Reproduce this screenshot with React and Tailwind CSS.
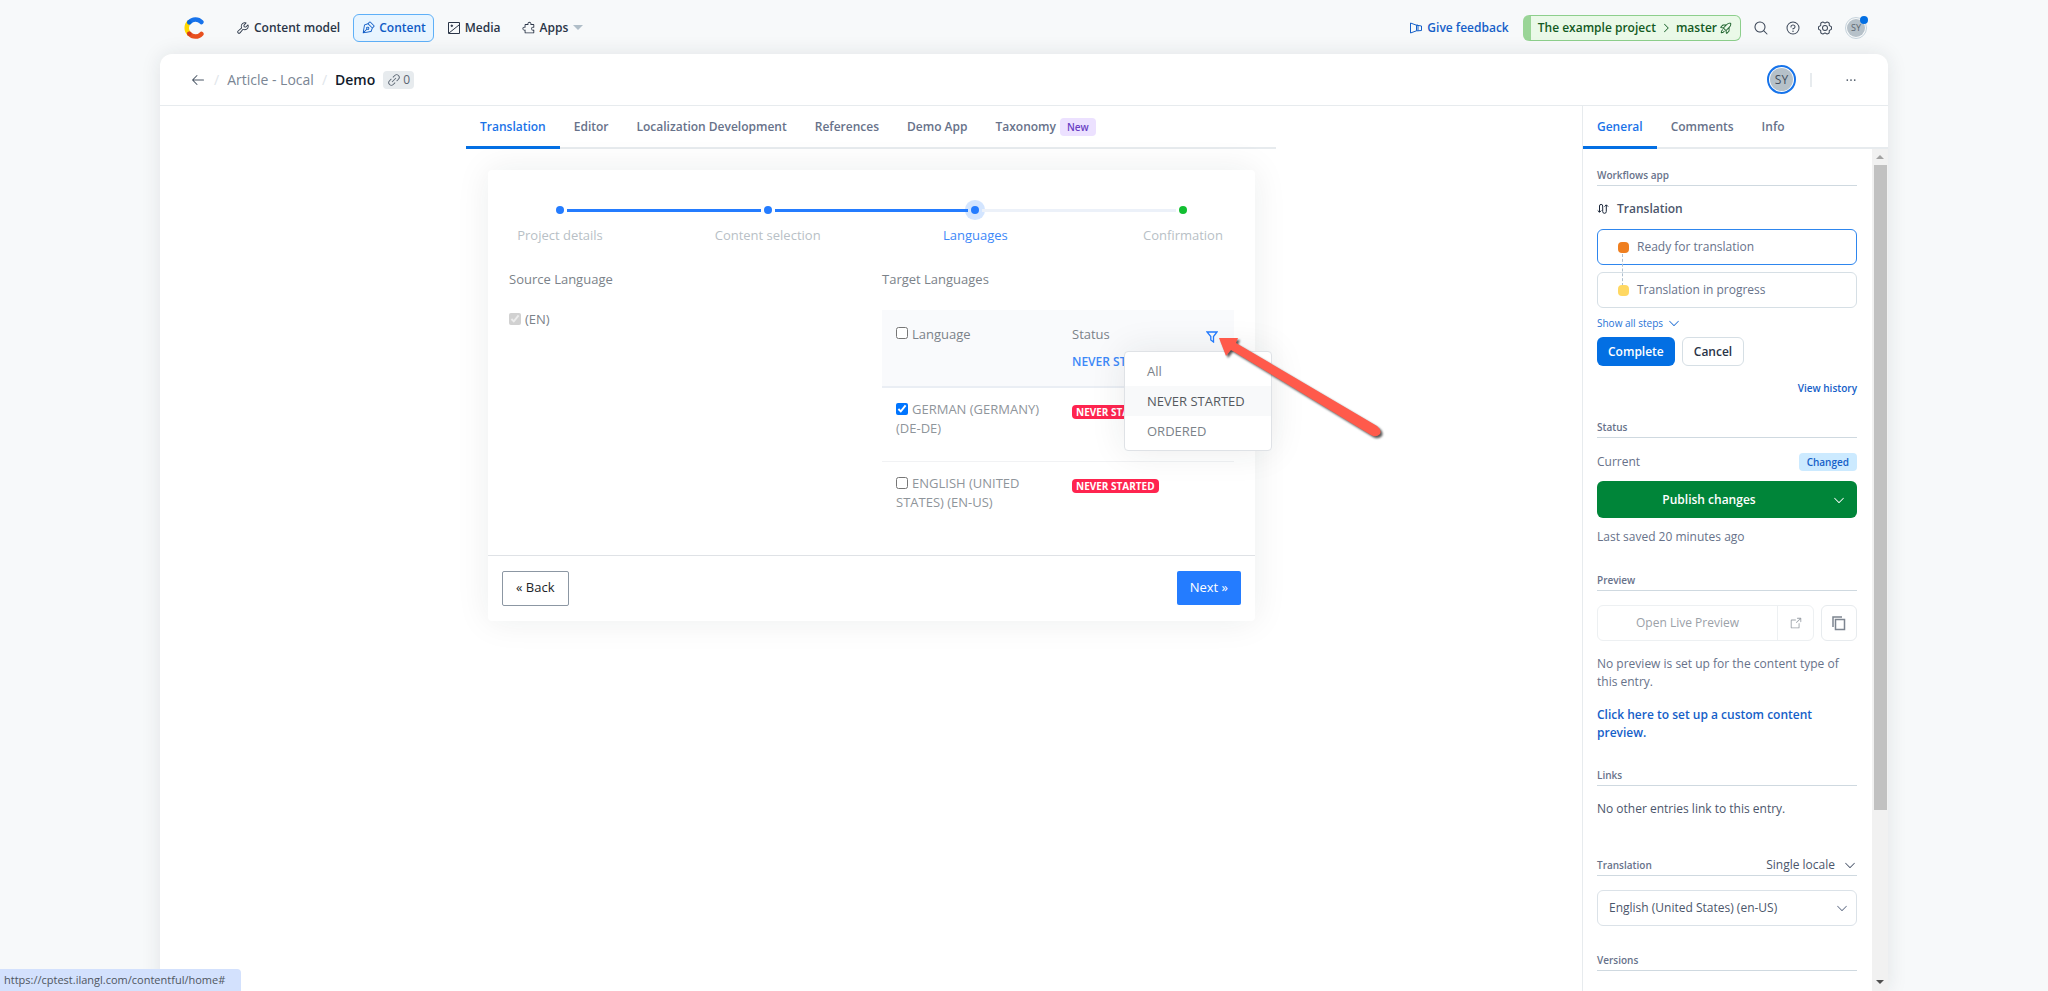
import React, { useState } from "react";
import {
    PiWrench, PiPenNib, PiPuzzlePiece, PiRocketLaunch, PiMagnifyingGlass, PiQuestion, PiGearSix,
    PiLinkSimple, PiArrowLeft, PiCaretRight, PiCaretDown, PiDotsThreeBold, PiArrowSquareOut,
} from "react-icons/pi";
import clsx from "clsx";

const steps = [
    { label: "Project details", state: "done" },
    { label: "Content selection", state: "done" },
    { label: "Languages", state: "active" },
    { label: "Confirmation", state: "last" },
];

const languages = [
    { id: "de", name: "GERMAN (GERMANY) (DE-DE)" },
    { id: "en", name: "ENGLISH (UNITED STATES) (EN-US)" },
];

function Logo() {
    return (
        <svg className="w-5 h-[22px]" viewBox="0 0 20 22" fill="none" strokeWidth="4.500" strokeLinecap="round">
            <path d="M5.2 5.2a8 8 0 0 0 0 11.6" stroke="#ffd800" />
            <path d="M5.4 16.8a8 8 0 0 0 12 .2" stroke="#e8501f" />
            <path d="M5.4 5.2a8 8 0 0 1 12-.2" stroke="#1773eb" />
            <circle cx="5.3" cy="5.2" r="2.2" fill="#0a68dc" />
            <circle cx="5.3" cy="16.8" r="2.2" fill="#d63c1c" />
        </svg>
    );
}

function ImageIcon() {
    return (
        <svg className="size-3.5" viewBox="0 0 14 14" fill="none" stroke="currentColor">
            <path d="M1.5 1.5h11v11h-11zM2 12l10-8" />
            <circle cx="4.8" cy="4.8" r=".8" fill="currentColor" />
        </svg>
    );
}

function FeedbackIcon() {
    return (
        <svg className="size-3.5" viewBox="0 0 14 14" fill="none" stroke="currentColor" strokeLinejoin="round">
            <path d="M1.5 2v10l6-2.200h1.500V4.200H7.500zM7.500 4.200v5.600M7.500 4.200L12.500 5v4.500L9 9.800" />
        </svg>
    );
}

function WorkflowIcon() {
    return (
        <svg className="size-3" viewBox="0 0 12 12" fill="none" stroke="#1b273a">
            <path d="M2.500 9V3a1.500 1.500 0 0 1 3.200 0v5.500a1.700 1.700 0 0 0 3.600 0V2M.7 7.500l1.800 1.800 1.800-1.800M7.500 3.600l1.800-1.800 1.800 1.800" />
        </svg>
    );
}

function CopyIcon() {
    return (
        <svg className="size-4" viewBox="0 0 16 16" fill="none" stroke="currentColor" strokeWidth="1.500">
            <path d="M4.500 4.500h9v10h-9zM2 12V2h9" />
        </svg>
    );
}

function FunnelIcon() {
    return (
        <svg className="size-3" viewBox="0 0 12 12" fill="none" stroke="currentColor" strokeWidth="1.300">
            <path d="M1 1h10L7.500 5.500v5.500L4.800 9V5.500z" />
        </svg>
    );
}

function PointerArrow() {
    return (
        <svg className="absolute left-[156px] top-[23px] w-[180px] h-[110px] pointer-events-none z-20 drop-shadow-[2px_2px_1px_rgba(0,0,0,0.65)]" viewBox="0 0 180 110">
            <path d="M5 5L24 5L22 10L163 93Q168 97 166 101Q162 105 157 102L17 17L12 23Z" fill="#ff5a4b" />
        </svg>
    );
}

function NavItem({ icon, label, active, caret }) {
    return (
        <a
            href="#"
            className={clsx(
                "flex items-center gap-1 h-7 px-[7px] border rounded-md text-xs font-semibold",
                active ? "bg-[#e8f5ff] border-[#5eb0f8] text-[#0e5bc5]" : "border-transparent text-[#2a3547]"
            )}
        >
            {icon}
            <span>{label}</span>
            {caret && <span className="ml-px border-x-[5px] border-x-transparent border-t-[5px] border-t-[#b0bec8]"></span>}
        </a>
    );
}

function TopBar() {
    return (
        <header className="flex items-center justify-between w-full max-w-[1728px] mx-auto h-[54px] pt-px pl-6 pr-[21px] shrink-0">
            <div className="flex items-center">
                <Logo />
                <nav className="flex items-center gap-[5px] ml-6">
                    <NavItem icon={<PiWrench className="size-3.5" />} label="Content model" />
                    <NavItem icon={<PiPenNib className="size-3.5" />} label="Content" active />
                    <NavItem icon={<ImageIcon />} label="Media" />
                    <NavItem icon={<PiPuzzlePiece className="size-3.5" />} label="Apps" caret />
                </nav>
            </div>
            <div className="flex items-center text-[#3b4657]">
                <a href="#" className="flex items-center gap-1 text-xs font-semibold text-[#1560c8] mr-3.5">
                    <FeedbackIcon />
                    Give feedback
                </a>
                <button className="flex items-center gap-1 h-[26px] px-[7px] border border-l-8 border-[#8dcf8c] border-l-[#9ad597] rounded-md bg-[#eaf9e8] text-xs font-semibold text-[#135a23]">
                    The example project
                    <PiCaretRight className="size-3" />
                    <span className="flex items-center gap-0.5">master <PiRocketLaunch className="size-3.5" /></span>
                </button>
                <div className="flex items-center gap-4 ml-3">
                    <button aria-label="Search"><PiMagnifyingGlass className="size-4" /></button>
                    <button aria-label="Help"><PiQuestion className="size-4" /></button>
                    <button aria-label="Settings"><PiGearSix className="size-4" /></button>
                </div>
                <button className="relative ml-3 size-[22px] rounded-full border border-[#c6d3dc] p-px">
                    <span className="flex items-center justify-center size-full rounded-full bg-[#b6c1c9] text-[9px] text-[#5b6672]">SY</span>
                    <span className="absolute -right-0.5 -top-0.5 size-2 rounded-full bg-[#036fe3]"></span>
                </button>
            </div>
        </header>
    );
}

function EntryHeader() {
    return (
        <div className="flex items-center justify-between h-[52px] px-[30px] border-b border-[#e7ebee] shrink-0">
            <div className="flex items-center text-sm">
                <button aria-label="Back to entries"><PiArrowLeft className="size-4 text-[#4b5766]" /></button>
                <span className="mx-2 text-[#e0e5ea]">/</span>
                <a href="#" className="text-[#7a8593]">Article - Local</a>
                <span className="mx-2 text-[#e0e5ea]">/</span>
                <h1 className="font-semibold text-[#111b2b]">Demo</h1>
                <span className="flex items-center gap-0.5 ml-2 h-[18px] px-1 rounded bg-[#e7ebee] text-xs text-[#5a6572]">
                    <PiLinkSimple className="size-3.5" />0
                </span>
            </div>
            <div className="flex items-center">
                <span className="size-[29px] rounded-full border-2 border-[#1673ea] p-px">
                    <span className="flex items-center justify-center size-full rounded-full bg-[#b6c1c9] text-xs text-[#414d5d]">SY</span>
                </span>
                <span className="w-0.5 h-3.5 ml-3.5 bg-[#e7ebee]"></span>
                <button aria-label="More actions" className="ml-8"><PiDotsThreeBold className="size-3.5 text-[#4b5766]" /></button>
            </div>
        </div>
    );
}

function Tab({ children, active }) {
    return (
        <button
            role="tab"
            aria-selected={!!active}
            className={clsx(
                "flex items-center gap-1 h-[43px] px-3.5 pt-0.5 -mb-0.5 border-b-[3px] text-xs font-semibold",
                active ? "border-[#036fe3] text-[#1a73e8]" : "border-transparent text-[#67728a]"
            )}
        >
            {children}
        </button>
    );
}

function Stepper() {
    return (
        <div>
            <div className="flex items-center h-5 px-[65px]">
                {steps.map((step, i) => (
                    <React.Fragment key={step.label}>
                        {i > 0 && <span className={clsx("flex-1 h-[3px]", i < 3 ? "bg-[#247cff]" : "bg-[#ecf1f9]")}></span>}
                        <span
                            className={clsx(
                                "size-2 mx-[3px] rounded-full",
                                step.state === "last" ? "bg-[#12bf31]" : "bg-[#247cff]",
                                step.state === "active" && "ring-[6px] ring-[#247cff]/20"
                            )}
                        ></span>
                    </React.Fragment>
                ))}
            </div>
            <ol className="flex justify-between mt-1.5">
                {steps.map((step) => (
                    <li key={step.label} className={clsx("w-36 text-center leading-[18px]", step.state === "active" ? "text-[#3d88f8]" : "text-[#b8bfc6]")}>
                        {step.label}
                    </li>
                ))}
            </ol>
        </div>
    );
}

function FilterMenu() {
    return (
        <>
            <div className="absolute top-[41px] -right-[38px] w-[148px] py-1 z-10 bg-white border border-[#dfe2e6] rounded shadow-[0_0_36px_rgba(30,40,40,0.09)] font-normal">
                <button className="block w-full h-[30px] pl-[22px] text-left text-[#7b8289]">All</button>
                <button className="block w-full h-[30px] pl-[22px] text-left bg-[#f8f9fa] text-[#55595f]">NEVER STARTED</button>
                <button className="block w-full h-[30px] pl-[22px] text-left text-[#7b8289]">ORDERED</button>
            </div>
            <PointerArrow />
        </>
    );
}

function LanguageTable() {
    const [selected, setSelected] = useState({ de: true, en: false });

    return (
        <table className="w-full table-fixed mt-[22px] border-collapse text-left leading-[19px]">
            <thead>
                <tr className="h-[77px] bg-[#f9fafc] border-b-2 border-[#eaeef4] align-top text-[#7b8289]">
                    <th className="pl-3.5 pt-[15px] font-medium">
                        <label className="flex gap-1"><input type="checkbox" className="size-3 mt-0.5" /> Language</label>
                    </th>
                    <th className="relative pl-3.5 pt-[15px] font-medium">
                        <div className="flex justify-between items-center pr-4">
                            Status
                            <button aria-label="Filter by status" className="mt-1 text-[#247cff]"><FunnelIcon /></button>
                        </div>
                        <div className="mt-2 text-xs leading-[19px] font-semibold text-[#3d88f8]">NEVER STARTED</div>
                        <FilterMenu />
                    </th>
                </tr>
            </thead>
            <tbody>
                {languages.map((lang) => (
                    <tr key={lang.id} className="h-[74px] border-b border-[#f1f2f4] last:border-0 align-top">
                        <td className="pl-3.5 pr-4 pt-3 text-[#8f959b]">
                            <label>
                                <input
                                    type="checkbox"
                                    className="size-3 mr-1 align-[-1px] accent-[#0075ff]"
                                    checked={selected[lang.id]}
                                    onChange={(e) => setSelected({ ...selected, [lang.id]: e.target.checked })}
                                />
                                {lang.name}
                            </label>
                        </td>
                        <td className="pl-3.5 pt-[17px]">
                            <span className="block w-fit h-3.5 px-1 rounded bg-[#ff244f] text-[10px] leading-[14px] font-bold text-white">NEVER STARTED</span>
                        </td>
                    </tr>
                ))}
            </tbody>
        </table>
    );
}

function Wizard() {
    return (
        <section className="ml-[22px] mr-[21px] mt-[21px] bg-white rounded shadow-[0_0_34px_rgba(30,40,40,0.08)] text-[13px] text-[#7b8289]">
            <div className="pt-[30px] pb-5">
                <Stepper />
                <div className="flex justify-between mt-[26px] px-[21px]">
                    <div>
                        <h2 className="font-medium leading-[18px]">Source Language</h2>
                        <label className="flex items-center gap-1 mt-[22px] leading-[18px]">
                            <input type="checkbox" className="size-3" checked disabled readOnly />
                            (EN)
                        </label>
                    </div>
                    <div className="w-[352px]">
                        <h2 className="font-medium leading-[18px]">Target Languages</h2>
                        <LanguageTable />
                    </div>
                </div>
            </div>
            <div className="flex justify-between items-center h-[66px] px-3.5 pb-px border-t border-[#dfe2e6]">
                <button className="h-[35px] px-[13px] border border-[#8c97a3] rounded-xs text-[#212529]">« Back</button>
                <button className="h-[34px] px-[13px] rounded-xs bg-[#247cff] text-white">Next »</button>
            </div>
        </section>
    );
}

function SectionHeading({ children, className }) {
    return (
        <h2 className={clsx("flex items-center justify-between h-[19px] pb-0.5 border-b border-[#cfd9e0] text-[10px] leading-4 font-semibold text-[#67728a]", className)}>
            {children}
        </h2>
    );
}

function WorkflowStep({ label, color, current, last }) {
    return (
        <li className={clsx("flex items-center gap-2 h-9 pl-5 border rounded-md bg-white", current ? "border-[#2e86ee]" : "border-[#d6dfe5]")}>
            <span className={clsx("relative size-[11px] rounded", color)}>
                {!last && <span className="absolute left-1 top-3 h-8 border-l border-dashed border-[#aebfce]"></span>}
            </span>
            {label}
        </li>
    );
}

function Sidebar() {
    return (
        <aside className="flex flex-col w-[306px] shrink-0 border-l border-[#e7ebee] overflow-hidden">
            <div role="tablist" className="flex h-[43px] shrink-0 border-b-2 border-[#e7ebee]">
                <Tab active>General</Tab>
                <Tab>Comments</Tab>
                <Tab>Info</Tab>
            </div>
            <div className="flex flex-1 min-h-0">
                <div className="flex-1 overflow-hidden pl-3.5 pr-[15px] pt-[18px] text-xs leading-[18px] text-[#67728a]">
                    <SectionHeading>Workflows app</SectionHeading>
                    <div className="flex items-center gap-2 mt-3.5 font-semibold text-[#4b566b]"><WorkflowIcon />Translation</div>
                    <ol className="flex flex-col gap-[7px] mt-[11px]">
                        <WorkflowStep label="Ready for translation" color="bg-[#ef7f20]" current />
                        <WorkflowStep label="Translation in progress" color="bg-[#ffd862]" last />
                    </ol>
                    <button className="flex items-center gap-1 mt-1.5 text-[10px] leading-[18px] text-[#2a74d6]">
                        Show all steps <PiCaretDown className="size-3.5" />
                    </button>
                    <div className="flex gap-[7px] mt-[5px] font-semibold">
                        <button className="h-[29px] px-[11px] rounded-md bg-[#036fe3] text-white">Complete</button>
                        <button className="h-[29px] px-[11px] rounded-md border border-[#d6dfe5] text-[#2a3547]">Cancel</button>
                    </div>
                    <a href="#" className="block mt-[13px] text-right text-[10px] leading-[18px] font-semibold text-[#1560c8]">View history</a>

                    <SectionHeading className="mt-[22px]">Status</SectionHeading>
                    <div className="flex items-center justify-between mt-[15px]">
                        Current
                        <span className="h-[18px] px-2 rounded bg-[#cceaff] text-[10px] font-semibold text-[#1560c8]">Changed</span>
                    </div>
                    <div className="flex mt-2.5 h-[37px] rounded-md bg-[#008539] font-semibold text-white">
                        <button className="flex-1">Publish changes</button>
                        <button aria-label="More publish actions" className="flex items-center justify-center w-9"><PiCaretDown className="size-3.5" /></button>
                    </div>
                    <p className="mt-2.5">Last saved 20 minutes ago</p>

                    <SectionHeading className="mt-[26px]">Preview</SectionHeading>
                    <div className="flex gap-[7px] mt-3.5 h-9 text-[#9ba1a8]">
                        <div className="flex flex-1 border border-[#edf0f2] rounded-md">
                            <button className="flex-1">Open Live Preview</button>
                            <button aria-label="Open in new tab" className="flex items-center justify-center w-9 border-l border-[#edf0f2]"><PiArrowSquareOut className="size-3.5" /></button>
                        </div>
                        <button aria-label="Copy preview link" className="flex items-center justify-center w-9 border border-[#e7ebee] rounded-md text-[#7d8590]"><CopyIcon /></button>
                    </div>
                    <p className="mt-3.5">No preview is set up for the content type of this entry.</p>
                    <a href="#" className="block mt-[15px] font-semibold text-[#1560c8]">Click here to set up a custom content preview.</a>

                    <SectionHeading className="mt-[25px]">Links</SectionHeading>
                    <p className="mt-3.5 text-[#4b566b]">No other entries link to this entry.</p>

                    <SectionHeading className="mt-[39px]">
                        Translation
                        <button className="flex items-center gap-2 text-xs font-normal text-[#4b566b]">Single locale <PiCaretDown className="size-3.5" /></button>
                    </SectionHeading>
                    <div className="relative mt-3.5">
                        <select aria-label="Locale" className="block w-full h-9 pl-[11px] appearance-none border border-[#dbe2e8] rounded-md bg-white text-[#4b566b]">
                            <option>English (United States) (en-US)</option>
                        </select>
                        <PiCaretDown className="absolute right-2 top-[11px] size-3.5 pointer-events-none" />
                    </div>

                    <SectionHeading className="mt-[26px]">Versions</SectionHeading>
                </div>
                <div className="flex flex-col items-center w-4 bg-[#f1f1f1]">
                    <span className="mt-1.5 border-x-4 border-x-transparent border-b-4 border-b-[#a3a3a3]"></span>
                    <span className="w-[13px] h-[645px] mt-1.5 bg-[#c1c1c1]"></span>
                    <span className="mt-auto mb-[7px] border-x-4 border-x-transparent border-t-4 border-t-[#505050]"></span>
                </div>
            </div>
        </aside>
    );
}

function App() {
    return (
        <div className="flex flex-col h-screen overflow-hidden bg-[#f7f9fa] font-['Open_Sans',sans-serif]">
            <TopBar />
            <div className="flex flex-col flex-1 min-h-0 w-full max-w-[1728px] mx-auto bg-white rounded-t-xl shadow-[0_0_20px_rgba(25,37,50,0.1)]">
                <EntryHeader />
                <div className="flex flex-1 min-h-0">
                    <main className="flex-1 overflow-hidden">
                        <div className="w-full max-w-[810px] mx-auto">
                            <div role="tablist" className="flex h-[43px] border-b-2 border-[#e7ebee]">
                                <Tab active>Translation</Tab>
                                <Tab>Editor</Tab>
                                <Tab>Localization Development</Tab>
                                <Tab>References</Tab>
                                <Tab>Demo App</Tab>
                                <Tab>
                                    Taxonomy
                                    <span className="h-[18px] px-[7px] rounded bg-[#ece1ff] text-[10px] leading-[18px] text-[#6a3fc4]">New</span>
                                </Tab>
                            </div>
                            <Wizard />
                        </div>
                    </main>
                    <Sidebar />
                </div>
            </div>
            <div className="fixed left-0 bottom-0 h-[22px] pl-1 pr-4 rounded-tr bg-[#d3e1fd] text-[11px] leading-[22px] text-[#4f5660]">
                https://cptest.ilangl.com/contentful/home#
            </div>
        </div>
    );
}

export default App;
